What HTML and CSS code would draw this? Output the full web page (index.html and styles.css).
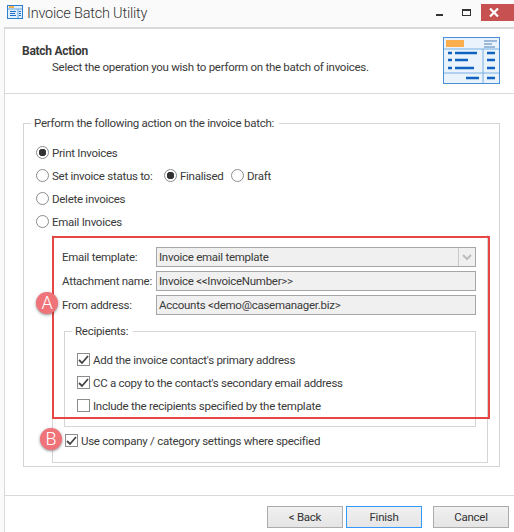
FILE: index.html
```html
<!DOCTYPE html>
<html lang="en">
<head>
    <meta charset="UTF-8">
    <meta name="viewport" content="width=device-width, initial-scale=1.0">
    <title>Invoice Batch Utility</title>
    <link rel="stylesheet" href="styles.css">
</head>
<body>
    <div class="window">
        <div class="titlebar">
            <svg class="app-icon" width="16" height="14" viewBox="0 0 16 14">
                <rect x="0.5" y="0.5" width="15" height="13" fill="#e3effa" stroke="#2f7fd0"/>
                <rect x="2" y="1" width="5" height="2" fill="#f5b04a"/>
                <path d="M1 4h14M11 4v9" stroke="#6aa5e0"/>
                <path d="M3 6.5h6M3 8.5h5M3 10.5h6M12 6.5h2M12 8.5h2M12 10.5h2" stroke="#1f6fc8"/>
            </svg>
            <span class="app-title">Invoice Batch Utility</span>
            <div class="controls">
                <span class="ctl-min"></span>
                <span class="ctl-max"></span>
                <span class="ctl-close">
                    <svg width="10" height="9" viewBox="0 0 10 9"><path d="M1 0.5L9 8.5M9 0.5L1 8.5" stroke="#fff" stroke-width="2.2"/></svg>
                </span>
            </div>
        </div>

        <div class="client">
            <div class="head">
                <div class="head-text">
                    <h1>Batch Action</h1>
                    <p>Select the operation you wish to perform on the batch of invoices.</p>
                </div>
                <svg class="head-icon" width="57" height="47" viewBox="0 0 57 47">
                    <rect x="0.5" y="0.5" width="56" height="46" fill="#eaf3fc" stroke="#4a90d8"/>
                    <rect x="3" y="3" width="18" height="7" fill="#fbae4e"/>
                    <path d="M41 4h13M41 7h8M41 10h11" stroke="#4f7fb8"/>
                    <path d="M1 12h55M1 36h55M40 12v34" stroke="#78aee4"/>
                    <path d="M5 16h4M12 16h22M5 23h4M12 23h13M5 31h4M12 31h19M44 16h8M44 23h8M44 31h8M23 41h13M44 41h8" stroke="#0f62c0" stroke-width="2.4"/>
                </svg>
            </div>

            <div class="body">
                <fieldset class="group outer">
                    <legend>Perform the following action on the invoice batch:</legend>
                    <div class="option"><span class="radio on"></span>Print Invoices</div>
                    <div class="option">
                        <span class="radio"></span><span class="status-label">Set invoice status to:</span>
                        <span class="radio on"></span><span class="finalised">Finalised</span>
                        <span class="radio"></span>Draft
                    </div>
                    <div class="option"><span class="radio"></span>Delete invoices</div>
                    <div class="option"><span class="radio"></span>Email Invoices</div>

                    <div class="email-group">
                        <div class="field-row">
                            <span class="field-label">Email template:</span>
                            <div class="field">Invoice email template<span class="drop"><svg width="10" height="7" viewBox="0 0 10 7"><path d="M1 1l4 4 4-4" fill="none" stroke="#bdbdbd" stroke-width="2"/></svg></span></div>
                        </div>
                        <div class="field-row">
                            <span class="field-label">Attachment name:</span>
                            <div class="field">Invoice &lt;&lt;InvoiceNumber&gt;&gt;</div>
                        </div>
                        <div class="field-row">
                            <span class="field-label">From address:</span>
                            <div class="field">Accounts &lt;demo@casemanager.biz&gt;</div>
                        </div>

                        <fieldset class="group recipients">
                            <legend>Recipients:</legend>
                            <div class="option"><span class="check on"><svg width="11" height="10" viewBox="0 0 11 10"><path d="M1 5l3 3 6-7" fill="none" stroke="#444" stroke-width="1.8"/></svg></span>Add the invoice contact's primary address</div>
                            <div class="option"><span class="check on"><svg width="11" height="10" viewBox="0 0 11 10"><path d="M1 5l3 3 6-7" fill="none" stroke="#444" stroke-width="1.8"/></svg></span>CC a copy to the contact's secondary email address</div>
                            <div class="option"><span class="check"></span>Include the recipients specified by the template</div>
                        </fieldset>

                        <div class="option company"><span class="check on"><svg width="11" height="10" viewBox="0 0 11 10"><path d="M1 5l3 3 6-7" fill="none" stroke="#444" stroke-width="1.8"/></svg></span>Use company / category settings where specified</div>
                    </div>
                </fieldset>
            </div>

            <div class="footer">
                <button type="button">&lt; Back</button>
                <button type="button" class="default">Finish</button>
                <button type="button" class="cancel">Cancel</button>
            </div>
        </div>
    </div>

    <div class="callout"></div>
    <div class="badge badge-a">A</div>
    <div class="badge badge-b">B</div>
</body>
</html>
```

FILE: styles.css
```css
* {
    margin: 0;
    padding: 0;
    box-sizing: border-box;
}

body {
    font-family: Roboto, "Open Sans", sans-serif;
    font-size: 11.5px;
    letter-spacing: -0.27px;
    color: #3a3a3a;
    background: #fafafa;
    width: 514px;
    height: 532px;
    overflow: hidden;
    position: relative;
}

.window {
    display: flex;
    flex-direction: column;
    height: 532px;
}

.titlebar {
    height: 27px;
    display: flex;
    align-items: center;
    padding-left: 7px;
    flex-shrink: 0;
    position: relative;
}

.app-icon {
    margin-bottom: 3px;
}

.app-title {
    font-size: 14.5px;
    font-weight: 300;
    letter-spacing: -0.2px;
    color: #333;
    margin-left: 4px;
}

.controls {
    margin-left: auto;
    display: flex;
    align-items: flex-start;
    align-self: flex-start;
}

.ctl-min {
    width: 7px;
    height: 2px;
    background: #333;
    margin: 14px 19px 0 0;
}

.ctl-max {
    width: 9px;
    height: 7px;
    border: 1px solid #333;
    border-top-width: 2px;
    margin: 9px 10px 0 0;
}

.ctl-close {
    width: 33px;
    height: 17px;
    margin-top: 4px;
    background: #c75050;
    display: flex;
    align-items: center;
    justify-content: center;
    padding-right: 8px;
}

.client {
    flex: 1;
    margin-left: 4px;
    background: #fff;
    border-left: 1px solid #d9d9d9;
    border-top: 2px solid #d9d9d9;
    display: flex;
    flex-direction: column;
}

.head {
    height: 65px;
    border-bottom: 1px solid #d9d9d9;
    display: flex;
    justify-content: space-between;
    padding: 8px 14px 0 17px;
    flex-shrink: 0;
}

.head-text {
    padding-top: 6px;
}

.head h1 {
    font-size: 12px;
    font-weight: 700;
    line-height: 16px;
}

.head p {
    margin-left: 30px;
    line-height: 16px;
}

.body {
    flex: 1;
    padding: 21px 14px 0 18px;
}

.group {
    border: 1px solid #d5d5d5;
}

.group legend {
    margin-left: -5px;
    padding: 0 5px 0 3px;
    line-height: 16px;
}

.outer {
    height: 352px;
    padding: 10px 0 0 12px;
}

.option {
    height: 23px;
    display: flex;
    align-items: center;
    white-space: nowrap;
}

.radio {
    width: 13px;
    height: 13px;
    border: 1px solid #8c8c8c;
    border-radius: 50%;
    margin-right: 3px;
    flex-shrink: 0;
    background: #fff;
}

.radio.on {
    background: radial-gradient(circle, #333 0 3.5px, #fff 4px);
}

.status-label {
    width: 112px;
}

.finalised {
    width: 51px;
}

.email-group {
    margin: 2px 11px 0 16px;
    border: 1px solid #d5d5d5;
    border-top: 0;
    height: 228px;
    padding: 12px 11px 0 9px;
}

.field-row {
    display: flex;
    align-items: center;
    height: 20px;
    margin-bottom: 4px;
}

.field-label {
    width: 94px;
    flex-shrink: 0;
    white-space: nowrap;
}

.field {
    flex: 1;
    height: 20px;
    background: #f0f0f0;
    border: 1px solid #a6a6a6;
    padding-left: 2px;
    line-height: 18px;
    position: relative;
}

.drop {
    position: absolute;
    top: 0;
    right: 0;
    width: 17px;
    height: 18px;
    border-left: 1px solid #c8c8c8;
    display: flex;
    align-items: center;
    justify-content: center;
}

.recipients {
    height: 104px;
    margin: 8px 0 0 2px;
    padding: 9px 0 0 12px;
}

.check {
    width: 13px;
    height: 13px;
    border: 1px solid #8c8c8c;
    background: #fff;
    margin-right: 3px;
    flex-shrink: 0;
    display: flex;
    align-items: center;
    justify-content: center;
}

.company {
    margin: 2px 0 0 3px;
}

.footer {
    height: 37px;
    border-top: 1px solid #d9d9d9;
    display: flex;
    padding: 10px 0 0 262px;
    flex-shrink: 0;
}

button {
    width: 76px;
    height: 22px;
    border: 1px solid #acacac;
    background: linear-gradient(#f0f0f0, #e5e5e5);
    font: inherit;
    letter-spacing: inherit;
    color: #333;
    margin-right: 3px;
}

button.default {
    border-color: #3399ff;
}

button.cancel {
    margin-left: 8px;
}

.callout {
    position: absolute;
    left: 52px;
    top: 236px;
    width: 438px;
    height: 183px;
    border: 2px solid #e84545;
}

.badge {
    position: absolute;
    width: 22px;
    height: 22px;
    border-radius: 50%;
    background: #ef7379;
    color: #fff;
    font-size: 18px;
    font-weight: 300;
    letter-spacing: 0;
    line-height: 22px;
    text-align: center;
    box-shadow: 0 1px 3px rgba(0, 0, 0, 0.45);
}

.badge-a {
    left: 36px;
    top: 292px;
}

.badge-b {
    left: 40px;
    top: 428px;
}
```
